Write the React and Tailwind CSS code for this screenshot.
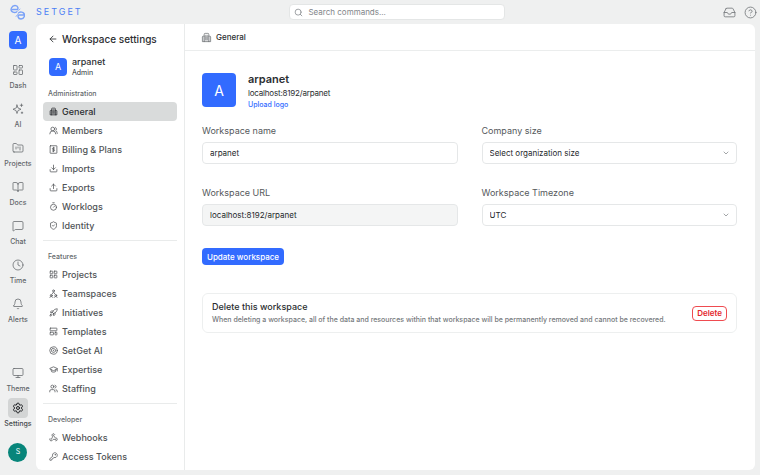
import React from 'react';
import {
  ArrowLeft, Bell, BookOpen, ChevronDown, CircleQuestionMark, Clock, Download, FolderKanban, GraduationCap, Inbox,
  KeyRound, LayoutDashboard, LayoutGrid, MessageSquare, Monitor, Rocket, Search,
  Settings, ShieldCheck, Timer, Upload, Users, UsersRound, Webhook,
} from 'lucide-react';

const railItems = [
  { label: 'Dash', icon: LayoutDashboard },
  { label: 'AI', icon: SparklesIcon },
  { label: 'Projects', icon: FolderKanban },
  { label: 'Docs', icon: BookOpen },
  { label: 'Chat', icon: MessageSquare },
  { label: 'Time', icon: Clock },
  { label: 'Alerts', icon: Bell },
];

const sections = [
  {
    title: 'Administration',
    items: [
      { label: 'General', icon: BuildingIcon, active: true },
      { label: 'Members', icon: UsersRound },
      { label: 'Billing & Plans', icon: BillingIcon },
      { label: 'Imports', icon: Download },
      { label: 'Exports', icon: Upload },
      { label: 'Worklogs', icon: Timer },
      { label: 'Identity', icon: ShieldCheck },
    ],
  },
  {
    title: 'Features',
    items: [
      { label: 'Projects', icon: LayoutGrid },
      { label: 'Teamspaces', icon: TeamsIcon },
      { label: 'Initiatives', icon: Rocket },
      { label: 'Templates', icon: TemplatesIcon },
      { label: 'SetGet AI', icon: AiIcon },
      { label: 'Expertise', icon: GraduationCap },
      { label: 'Staffing', icon: Users },
    ],
  },
  {
    title: 'Developer',
    items: [
      { label: 'Webhooks', icon: Webhook },
      { label: 'Access Tokens', icon: KeyRound },
    ],
  },
];

function Svg({ size = 24, strokeWidth = 2, className, children }) {
  return (
    <svg width={size} height={size} viewBox="0 0 24 24" fill="none" stroke="currentColor" strokeWidth={strokeWidth} strokeLinecap="round" strokeLinejoin="round" className={className} aria-hidden="true">
      {children}
    </svg>
  );
}

function SparklesIcon(props) {
  return (
    <Svg {...props}>
      <path d="M10 4l2 6 6 2.5-6 2.5-2 6-2-6-6-2.5L8 10z" />
      <path d="M19 2v5M16.500 4.500h5M20 18v3M18.500 19.500h3" />
    </Svg>
  );
}

function BuildingIcon(props) {
  return (
    <Svg {...props}>
      <path d="M7 21V5a2 2 0 0 1 2-2h6a2 2 0 0 1 2 2v16" />
      <path d="M7 9H5a2 2 0 0 0-2 2v10h18V11a2 2 0 0 0-2-2h-2M10.500 7v10M13.500 7v10" fill="currentColor" fillOpacity="0.2" />
    </Svg>
  );
}

function BillingIcon(props) {
  return (
    <Svg {...props}>
      <rect x="3" y="2" width="18" height="20" rx="1" />
      <path d="M15 8H11a2 2 0 0 0 0 4h2a2 2 0 0 1 0 4H9M12 6v12" />
    </Svg>
  );
}

function TeamsIcon(props) {
  return (
    <Svg {...props}>
      <circle cx="12" cy="5" r="2.500" />
      <circle cx="6" cy="17" r="2.500" />
      <circle cx="18" cy="17" r="2.500" />
      <path d="M9 12c0-4 6-4 6 0M2 22c0-3 8-3 8 0M14 22c0-3 8-3 8 0" />
    </Svg>
  );
}

function TemplatesIcon(props) {
  return (
    <Svg {...props}>
      <rect x="3" y="3" width="18" height="7" rx="1" />
      <rect x="3" y="14" width="9" height="7" rx="1" />
      <rect x="16" y="14" width="5" height="7" rx="1" />
    </Svg>
  );
}

function AiIcon(props) {
  return (
    <Svg {...props}>
      <circle cx="12" cy="12" r="10" />
      <path d="M12 6.500l5 2.800v5.400l-5 2.800-5-2.800V9.300z" />
      <path d="M12 11v2" />
    </Svg>
  );
}

function Logo() {
  return (
    <svg width="15" height="16" viewBox="0 0 30 32" fill="none" stroke="#7ba2f7" strokeWidth="2.800" strokeLinecap="round" strokeLinejoin="round" aria-hidden="true">
      <path d="M5 11h9c3 0 3-8-4-8s-9 8-7 11 7 4 10 2" />
      <path d="M27 22h-9c-3 0-3 8 4 8s8-8 6-11-7-4-10-2" />
      <path d="M13 16c3-2 5-5 7-6M18 17c-2 3-4 5-6 8" strokeWidth="1.500" />
    </svg>
  );
}

function RailItem({ label, icon: Icon, active }) {
  return (
    <a href="#" className="flex flex-col items-center text-[#62666a]">
      <span className={active ? 'flex size-5 items-center justify-center rounded bg-[#d3d5d5] text-[#202225]' : 'flex size-5 items-center justify-center'}>
        <Icon size={12} strokeWidth={active ? 2 : 1.5} />
      </span>
      <span className={active ? 'text-[7px] leading-[11px] font-medium text-[#45484b]' : 'text-[7px] leading-[11px] font-medium'}>{label}</span>
    </a>
  );
}

function SelectField({ id, label, value }) {
  return (
    <div className="flex flex-col gap-1">
      <label htmlFor={id} className="text-[9px] leading-[14px] text-[#55595c]">{label}</label>
      <div className="relative">
        <select id={id} className="block h-[22px] w-full appearance-none rounded border border-[#e5e7e8] bg-white px-[7px] text-[8px] text-[#25282b] outline-none">
          <option>{value}</option>
        </select>
        <ChevronDown size={8} className="pointer-events-none absolute top-[7px] right-[7px] text-[#74787b]" />
      </div>
    </div>
  );
}

function TextField({ id, label, value, readOnly }) {
  return (
    <div className="flex flex-col gap-1">
      <label htmlFor={id} className="text-[9px] leading-[14px] text-[#55595c]">{label}</label>
      <input
        id={id}
        type="text"
        defaultValue={value}
        readOnly={readOnly}
        className={`h-[22px] w-full rounded border border-[#e5e7e8] px-[7px] text-[8px] text-[#25282b] outline-none ${readOnly ? 'bg-[#f4f5f5]' : 'bg-white'}`}
      />
    </div>
  );
}

export default function App() {
  return (
    <div className="flex h-screen flex-col overflow-hidden bg-[#eff0f0] font-['Inter',sans-serif] text-[#2b2e31]">
      <header className="grid h-6 shrink-0 grid-cols-[10fr_216px_9fr] items-center pr-[3px] pl-2.5">
        <div className="flex items-center gap-[11px]">
          <Logo />
          <span className="text-[9px] tracking-[2px] text-[#4c80f5]">SETGET</span>
        </div>
        <label className="flex h-4 items-center gap-[5px] rounded border border-[#e4e6e6] bg-white px-1 text-[#82868a]">
          <Search size={9} className="shrink-0" />
          <input type="text" aria-label="Search commands" placeholder="Search commands..." className="w-full bg-transparent text-[8px] outline-none placeholder:text-[#82868a]" />
        </label>
        <div className="flex items-center justify-end gap-2 text-[#707478]">
          <button type="button" aria-label="Inbox"><Inbox size={13} strokeWidth={1.5} /></button>
          <button type="button" aria-label="Help"><CircleQuestionMark size={13} strokeWidth={1.5} /></button>
        </div>
      </header>

      <div className="flex min-h-0 flex-1 pr-[5px] pb-[5px]">
        {/* App rail */}
        <nav className="flex w-9 shrink-0 flex-col items-center pt-[7px] pb-2">
          <button type="button" className="flex size-[18px] shrink-0 items-center justify-center rounded bg-[#326bff] text-[10px] text-white">A</button>
          <div className="mt-[11px] flex flex-col gap-2">
            {railItems.map((item) => <RailItem key={item.label} {...item} />)}
          </div>
          <div className="mt-auto flex flex-col items-center gap-1">
            <RailItem label="Theme" icon={Monitor} />
            <RailItem label="Settings" icon={Settings} active />
            <button type="button" className="mt-2.5 flex size-[19px] items-center justify-center rounded-full bg-[#07857a] text-[7px] text-white">S</button>
          </div>
        </nav>

        <div className="flex min-w-0 flex-1 overflow-hidden rounded-md bg-white">
          {/* Settings sidebar */}
          <aside className="w-[149px] shrink-0 border-r border-[#e9ebeb] px-[7px] pt-2">
            <div className="flex items-center gap-1 px-[5px]">
              <button type="button" aria-label="Back"><ArrowLeft size={10} /></button>
              <h1 className="text-[10px] leading-[14px] font-medium">Workspace settings</h1>
            </div>
            <div className="my-2.5 flex items-center gap-[5px] px-1.5">
              <span className="flex size-[18px] items-center justify-center rounded bg-[#326bff] text-[9px] text-white">A</span>
              <div className="flex flex-col">
                <span className="text-[9px] leading-[12px] font-medium">arpanet</span>
                <span className="text-[7px] leading-[9px]">Admin</span>
              </div>
            </div>
            {sections.map((section) => (
              <section key={section.title} className="mb-[9px] border-b border-[#e9ebeb] pb-[5px] last:border-0">
                <h2 className="mb-0.5 px-[5px] text-[7px] leading-[13px] font-medium text-[#65696c]">{section.title}</h2>
                <ul>
                  {section.items.map(({ label, icon: Icon, active }) => (
                    <li key={label}>
                      <a href="#" className={`flex h-[19px] items-center gap-1 rounded px-1.5 text-[9px] font-medium ${active ? 'bg-[#d9dbdb] text-[#2b2e31]' : 'text-[#505356]'}`}>
                        <Icon size={9} />
                        {label}
                      </a>
                    </li>
                  ))}
                </ul>
              </section>
            ))}
          </aside>

          <main className="min-w-0 flex-1">
            <div className="flex h-[27px] items-center gap-1 border-b border-[#ebeded] px-4">
              <BuildingIcon size={11} strokeWidth={1.5} className="text-[#65696c]" />
              <span className="text-[8px] font-medium">General</span>
            </div>
            <div className="pt-[22px] pr-[18px] pl-[17px]">
              <div className="mb-[17px] flex h-[34px] items-center gap-3">
                <span className="flex size-[34px] items-center justify-center rounded bg-[#326bff] text-[14px] text-white">A</span>
                <div className="flex flex-col items-start">
                  <h2 className="text-[11px] leading-[15px] font-semibold">arpanet</h2>
                  <span className="text-[8px] leading-[13px] tracking-tight">localhost:8192/arpanet</span>
                  <button type="button" className="text-[7px] leading-[9px] font-medium text-[#326bff]">Upload logo</button>
                </div>
              </div>
              <form className="grid grid-cols-2 gap-x-6 gap-y-[22px]" onSubmit={(e) => e.preventDefault()}>
                <TextField id="name" label="Workspace name" value="arpanet" />
                <SelectField id="size" label="Company size" value="Select organization size" />
                <TextField id="url" label="Workspace URL" value="localhost:8192/arpanet" readOnly />
                <SelectField id="timezone" label="Workspace Timezone" value="UTC" />
                <button type="submit" className="h-[17px] justify-self-start rounded bg-[#326bff] px-[5px] text-[8px] font-medium text-white">Update workspace</button>
              </form>
              <section className="mt-7 flex items-center justify-between rounded-md border border-[#edefef] px-[9px] py-1.5">
                <div>
                  <h3 className="text-[9px] leading-[13px] font-medium">Delete this workspace</h3>
                  <p className="text-[7px] leading-[13px] font-medium text-[#75797c]">
                    When deleting a workspace, all of the data and resources within that workspace will be permanently removed and cannot be recovered.
                  </p>
                </div>
                <button type="button" className="h-[15px] rounded border border-[#ef4b50] px-1 text-[8px] font-semibold text-[#e3262d]">Delete</button>
              </section>
            </div>
          </main>
        </div>
      </div>
    </div>
  );
}
